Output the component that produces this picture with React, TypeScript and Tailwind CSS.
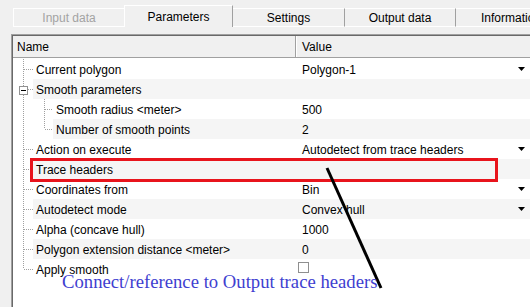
import React from "react";

type Row = {
  label: string;
  value?: string;
  level: 1 | 2;
  dropdown?: boolean;
  expander?: boolean;
  checkbox?: boolean;
  last?: boolean;
  lastChild?: boolean;
};

const rows: Row[] = [
  { label: "Current polygon", value: "Polygon-1", level: 1, dropdown: true },
  { label: "Smooth parameters", level: 1, expander: true },
  { label: "Smooth radius <meter>", value: "500", level: 2 },
  { label: "Number of smooth points", value: "2", level: 2, lastChild: true },
  { label: "Action on execute", value: "Autodetect from trace headers", level: 1, dropdown: true },
  { label: "Trace headers", level: 1 },
  { label: "Coordinates from", value: "Bin", level: 1, dropdown: true },
  { label: "Autodetect mode", value: "Convex hull", level: 1, dropdown: true },
  { label: "Alpha (concave hull)", value: "1000", level: 1 },
  { label: "Polygon extension distance <meter>", value: "0", level: 1 },
  { label: "Apply smooth", level: 1, checkbox: true, last: true },
];

const DOT = "#a0a0a0";

function Gutter({ row }: { row: Row }) {
  const w = row.level === 1 ? 20 : 40;
  return (
    <svg width={w} height={20} className="shrink-0 block">
      <line
        x1={10.5}
        y1={0}
        x2={10.5}
        y2={row.last ? 10 : 20}
        stroke={DOT}
        strokeDasharray="1 1"
      />
      {row.level === 1 && !row.expander && (
        <line x1={11} y1={10.5} x2={20} y2={10.5} stroke={DOT} strokeDasharray="1 1" />
      )}
      {row.expander && (
        <>
          <rect x={6.5} y={7.5} width={8} height={8} fill="#fff" stroke="#919191" />
          <line x1={8} y1={11.5} x2={13} y2={11.5} stroke="#000" />
          <line x1={15} y1={10.5} x2={20} y2={10.5} stroke={DOT} strokeDasharray="1 1" />
        </>
      )}
      {row.level === 2 && (
        <>
          <line
            x1={31.5}
            y1={0}
            x2={31.5}
            y2={row.lastChild ? 10 : 20}
            stroke={DOT}
            strokeDasharray="1 1"
          />
          <line x1={32} y1={10.5} x2={40} y2={10.5} stroke={DOT} strokeDasharray="1 1" />
        </>
      )}
    </svg>
  );
}

function Arrow() {
  return (
    <svg width={7} height={4} className="block">
      <polygon points="0,0 7,0 3.5,4" fill="#000" />
    </svg>
  );
}

export default function App() {
  return (
    <div
      className="w-[530px] h-[307px] bg-[#f0f0f0] relative overflow-hidden text-[12px] text-black"
      style={{ fontFamily: "'Liberation Sans', Arial, sans-serif" }}
    >
      {/* Tabs */}
      <div className="flex items-end h-[27px] pl-[13px]">
        <div className="shrink-0 w-[111px] h-[19px] border-t border-l border-b border-white flex items-center justify-center text-[#a3a3a3] pt-[1px]">
          Input data
        </div>
        <div className="shrink-0 w-[109px] h-[22px] border-t border-l border-white border-r border-r-[#a0a0a0] flex items-center justify-center">
          Parameters
        </div>
        <div className="shrink-0 w-[112px] h-[19px] border-t border-b border-white border-r border-r-[#a0a0a0] flex items-center justify-center pt-[1px]">
          Settings
        </div>
        <div className="shrink-0 w-[111px] h-[19px] border-t border-b border-white border-r border-r-[#a0a0a0] flex items-center justify-center pt-[1px]">
          Output data
        </div>
        <div className="shrink-0 w-[111px] h-[19px] border-t border-b border-white border-r border-r-[#a0a0a0] flex items-center justify-center pt-[1px]">
          Information
        </div>
      </div>

      {/* Tab page */}
      <div className="pt-[7px] pl-[11px]">
        <div className="w-[540px] h-[300px] border-t border-l border-[#a0a0a0]">
          <div className="h-full border-t border-l border-[#696969] bg-white">
            {/* header */}
            <div className="h-[22px] flex bg-[#f0f0f0] border-b border-[#a0a0a0]">
              <div className="w-[283px] pl-[4px] pt-[1px] flex items-center border-r border-[#a0a0a0]">Name</div>
              <div className="flex-1 pl-[5px] pt-[1px] flex items-center border-l border-white">Value</div>
            </div>
            <div className="h-[1px]" />
            {rows.map((r, i) => {
              const shaded = i % 2 === 1;
              const bg = shaded ? "bg-[#f5f5f5]" : "bg-white";
              return (
                <div key={r.label} className="flex h-[20px]">
                  <Gutter row={r} />
                  <div className={`flex-1 flex ${bg}`}>
                    <div
                      className={`${r.level === 1 ? "w-[264px]" : "w-[244px]"} pl-[3px] pt-[1px] flex items-center whitespace-nowrap`}
                    >
                      {r.label}
                    </div>
                    <div className="w-[228px] pl-[5px] flex items-center">
                      {r.value && <span className="whitespace-nowrap pt-[1px]">{r.value}</span>}
                      {r.checkbox && (
                        <span className="block w-[11px] h-[11px] border border-[#8f8f8f] bg-white -mt-[4px] ml-[-4px]" />
                      )}
                      <span className="flex-1" />
                      {r.dropdown && <Arrow />}
                    </div>
                  </div>
                </div>
              );
            })}
          </div>
        </div>
      </div>

      {/* Annotations */}
      <div className="absolute left-[30px] top-[158px] w-[468px] h-[24px] border-[3px] border-[#e8141c]" />
      <svg className="absolute left-0 top-0 pointer-events-none" width={530} height={307}>
        <line x1={327} y1={168} x2={381} y2={288} stroke="#000" strokeWidth={3} />
      </svg>
      <div
        className="absolute left-[62px] top-[271px] text-[18.7px] leading-[22px] text-[#4040d0] whitespace-nowrap"
        style={{ fontFamily: "'Liberation Serif', 'Times New Roman', serif" }}
      >
        Connect/reference to Output trace headers
      </div>
    </div>
  );
}
